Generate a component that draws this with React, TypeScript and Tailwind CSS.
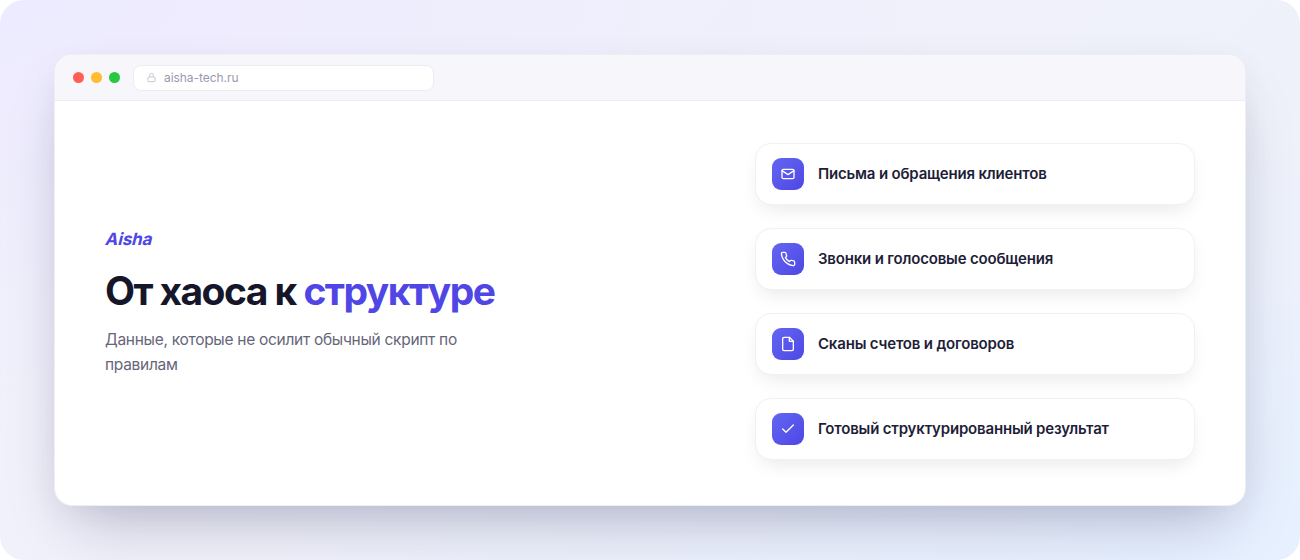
import React from 'react';

interface FeatureProps {
  text: string;
  icon: React.ReactNode;
}

const Feature: React.FC<FeatureProps> = ({ text, icon }) => {
  return (
    <div className="flex h-[62px] w-[440px] items-center gap-3.5 rounded-2xl border border-[#f0f0f5] bg-white px-4 shadow-[0_8px_20px_-6px_rgba(22,22,46,0.11)]">
      <div className="flex h-8 w-8 items-center justify-center rounded-[9px] bg-linear-135 from-[#6366f1] to-[#4f46e5]">
        <svg
          className="h-4 w-4"
          viewBox="0 0 24 24"
          fill="none"
          stroke="white"
          strokeWidth="2"
          strokeLinecap="round"
          strokeLinejoin="round"
        >
          {icon}
        </svg>
      </div>
      <span className="text-[15px] leading-5 font-semibold tracking-[-0.18px] whitespace-nowrap text-[#1e1e38]">{text}</span>
    </div>
  );
};

const features: FeatureProps[] = [
  {
    text: 'Письма и обращения клиентов',
    icon: (
      <>
        <rect x="3" y="5" width="18" height="14" rx="2" />
        <path d="M3 7l9 6 9-6" />
      </>
    ),
  },
  {
    text: 'Звонки и голосовые сообщения',
    icon: (
      <path d="M22 16.92v3a2 2 0 0 1-2.18 2 19.79 19.79 0 0 1-8.63-3.07 19.5 19.5 0 0 1-6-6 19.79 19.79 0 0 1-3.07-8.67A2 2 0 0 1 4.11 2h3a2 2 0 0 1 2 1.72c.13.96.36 1.9.7 2.81a2 2 0 0 1-.45 2.11L8.09 9.91a16 16 0 0 0 6 6l1.27-1.27a2 2 0 0 1 2.11-.45c.91.34 1.85.57 2.81.7A2 2 0 0 1 22 16.92z" />
    ),
  },
  {
    text: 'Сканы счетов и договоров',
    icon: (
      <>
        <path d="M14 2H6a2 2 0 0 0-2 2v16a2 2 0 0 0 2 2h12a2 2 0 0 0 2-2V8z" />
        <path d="M14 2v6h6" />
      </>
    ),
  },
  {
    text: 'Готовый структурированный результат',
    icon: <path d="M20 6L9 17l-5-5" />,
  },
];

const App: React.FC = () => {
  return (
    <div className="h-[560px] w-[1300px] overflow-hidden rounded-3xl bg-[radial-gradient(ellipse_at_0%_0%,#edebff_0%,transparent_55%),radial-gradient(ellipse_at_100%_100%,#e6f0ff_0%,transparent_55%),linear-gradient(135deg,#f2f1fb,#eef1fa)] p-[54px] font-[Inter,sans-serif]">
      <div className="flex h-full flex-col overflow-hidden rounded-[18px] border border-[#eeeef5] bg-white shadow-[0_30px_60px_-20px_rgba(22,22,66,0.28),0_8px_30px_rgba(22,22,66,0.04)]">
        <div className="flex h-[46px] shrink-0 items-center border-b border-[#ececf2] bg-[#f6f6fb] px-[18px]">
          <div className="flex gap-[7px]">
            <div className="h-[11px] w-[11px] rounded-full bg-[#ff5f57]" />
            <div className="h-[11px] w-[11px] rounded-full bg-[#febc2e]" />
            <div className="h-[11px] w-[11px] rounded-full bg-[#28c840]" />
          </div>
          <div className="ml-[13px] flex h-[26px] w-[301px] items-center gap-[7px] rounded-lg border border-[#ebebf2] bg-white px-3">
            <svg
              className="h-[11px] w-[11px]"
              viewBox="0 0 24 24"
              fill="none"
              stroke="#c3c3d0"
              strokeWidth="2"
            >
              <rect x="4" y="11" width="16" height="10" rx="2" />
              <path d="M8 11V7a4 4 0 0 1 8 0v4" />
            </svg>
            <span className="text-xs tracking-[-0.05px] text-[#9a9aad]">aisha-tech.ru</span>
          </div>
        </div>
        <div className="flex flex-1 items-center justify-between px-[50px] pb-[3px]">
          <div className="w-[400px]">
            <div className="w-fit -skew-x-[14deg] pl-px text-[17px] leading-6 font-bold tracking-[-0.1px] text-[#4f46e5]">Aisha</div>
            <h1 className="mt-[17px] text-[39px] leading-[46px] font-bold tracking-[-1.55px] whitespace-nowrap text-[#16162b]">
              От хаоса к <span className="text-[#4f46e5]">структуре</span>
            </h1>
            <p className="mt-[13px] text-[15.5px] leading-[25px] tracking-[-0.29px] text-[#666679]">
              Данные, которые не осилит обычный скрипт по правилам
            </p>
          </div>
          <div className="flex flex-col gap-[23px]">
            {features.map((feature) => (
              <Feature key={feature.text} {...feature} />
            ))}
          </div>
        </div>
      </div>
    </div>
  );
};

export default App;
